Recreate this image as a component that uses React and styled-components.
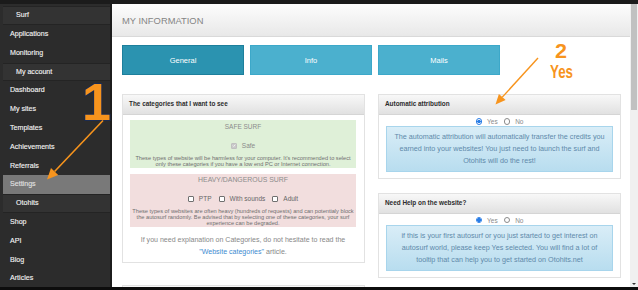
import React from 'react'
import styled, { createGlobalStyle } from 'styled-components'

const GlobalStyle = createGlobalStyle`
  html, body {
    margin: 0;
    padding: 0;
    background: #161616;
    overflow: hidden;
  }
  body {
    font-family: "Liberation Sans", Arial, sans-serif;
  }
`

const Screen = styled.div`
  position: relative;
  width: 638px;
  height: 290px;
  display: flex;
  flex-direction: column;
  background: #161616;
  overflow: hidden;
`

const TopStrip = styled.div`
  flex: none;
  height: 4px;
  background: #1b1b1b;
`

const Body = styled.div`
  flex: none;
  display: flex;
  height: 283px;
`

const BottomStrip = styled.div`
  flex: none;
  height: 3px;
  background: #0d0d0d;
`

const Sidebar = styled.nav`
  flex: none;
  width: 107px;
  padding: 2.2px 0 0 3px;
  background: #2c2c2c;
  border-right: 2px solid #1c1c1c;
  overflow: hidden;
`

const NavItem = styled.div`
  box-sizing: border-box;
  height: 18.8px;
  padding-left: ${p => (p.$section ? 13 : 7)}px;
  font-size: 7.1px;
  white-space: nowrap;
  color: ${p => (p.$active ? '#e2e2e2' : '#f4f4f4')};
  -webkit-text-stroke: 0.12px currentColor;
  background: ${p => (p.$active ? '#797979' : p.$section ? '#333333' : 'transparent')};
  border-top: ${p => (p.$section ? '1px solid #242424' : 'none')};
  border-bottom: ${p => (p.$section ? '1px solid #242424' : 'none')};
  line-height: ${p => (p.$section ? 16.8 : 18.8)}px;
`

const Main = styled.main`
  flex: 1;
  min-width: 0;
  display: flex;
  flex-direction: column;
  background: #fff;
  overflow: hidden;
`

const PanelTitle = styled.header`
  flex: none;
  height: 32px;
  display: flex;
  align-items: center;
  padding-left: 10px;
  border-bottom: 1px solid #d9d9d9;
  background: linear-gradient(#fdfdfd, #e8e8e8);
  font-size: 9.4px;
  color: #858585;
`

const Content = styled.div`
  padding: 8px 9px 0 10px;
`

const Tabs = styled.div`
  display: flex;
  gap: 6px;
`

const Tab = styled.div`
  box-sizing: border-box;
  width: 122px;
  height: 30px;
  display: flex;
  align-items: center;
  justify-content: center;
  border: 1px solid ${p => (p.$active ? '#1d7f9c' : '#3ca8c9')};
  background: ${p => (p.$active ? '#2b93b0' : '#4bb0ce')};
  color: #fff;
  font-size: 7.5px;
`

const Columns = styled.div`
  display: grid;
  grid-template-columns: 243px 243px;
  column-gap: 13px;
  align-items: start;
  margin-top: 19px;
`

const Column = styled.div`
  display: flex;
  flex-direction: column;
  gap: ${p => p.$gap}px;
`

const Card = styled.section`
  box-sizing: border-box;
  border: 1px solid #e2e2e2;
  background: #fff;
`

const CardHeader = styled.div`
  box-sizing: border-box;
  height: 20px;
  line-height: 18px;
  padding-left: 6px;
  border-bottom: 1px solid #d5d5d5;
  background: linear-gradient(#f8f8f8, #e1e1e1);
  font-size: 6.4px;
  font-weight: bold;
  color: #2c2c2c;
`

const CategoryBody = styled.div`
  padding: 5px 8px 5px 7px;
`

const SurfBox = styled.div`
  padding: 0.5px 2px 0.5px;
  text-align: center;
  background: ${p => (p.$tone === 'danger' ? '#f2dede' : '#dff0d8')};
  & + & {
    margin-top: 6px;
  }
`

const BoxTitle = styled.div`
  line-height: 12px;
  font-size: ${p => p.$size}px;
  color: #8c8c8c;
`

const CheckRow = styled.div`
  display: flex;
  justify-content: center;
  align-items: center;
  gap: 7px;
  height: 10px;
  margin-top: ${p => p.$top}px;
  font-size: 6.5px;
  color: #6a6a6a;
`

const CheckOption = styled.label`
  display: inline-flex;
  align-items: center;
  gap: 5px;
  color: ${p => (p.$disabled ? '#8a8a8a' : '#666')};
`

const Box = styled.span`
  box-sizing: border-box;
  width: 6px;
  height: 6px;
  display: inline-flex;
  align-items: center;
  justify-content: center;
  border: 1px solid ${p => (p.$checked ? '#c0c0c0' : '#707070')};
  border-radius: 1px;
  background: ${p => (p.$checked ? '#c9c9c9' : '#fff')};
`

const Desc = styled.div`
  margin-top: 4.3px;
  font-size: 5.65px;
  line-height: 6.2px;
  color: #6f6f6f;
  white-space: nowrap;
`

const HelpText = styled.p`
  margin: 6.8px 0 0;
  text-align: center;
  font-size: 7.05px;
  line-height: 11.7px;
  color: #888;
  white-space: nowrap;
`

const Link = styled.a`
  color: #3d8bd1;
  text-decoration: none;
`

const OptionBody = styled.div`
  padding: 1.3px 7px 6px 7px;
`

const RadioRow = styled.div`
  display: flex;
  justify-content: center;
  align-items: center;
  height: 10px;
  font-size: 6.5px;
  color: #8a8a8a;
`

const RadioOption = styled.label`
  display: inline-flex;
  align-items: center;
  gap: 5px;
  & + & {
    margin-left: 6px;
  }
`

const Radio = styled.span`
  box-sizing: border-box;
  width: 6.5px;
  height: 6.5px;
  border-radius: 50%;
  border: 1px solid ${p => (p.$checked ? '#2a7de6' : '#8a8a8a')};
  background: ${p => (p.$checked ? 'radial-gradient(circle, #2a7de6 0 1.6px, #fff 1.9px)' : '#fff')};
`

const InfoBox = styled.div`
  padding: 3.8px 2px;
  border: 1px solid #a8d5ec;
  background: linear-gradient(#d9edf7, #b8ddef);
  text-align: center;
  font-size: 7.2px;
  line-height: 12px;
  color: #6089aa;
  white-space: nowrap;
`

const Scrollbar = styled.div`
  flex: none;
  width: 8px;
  display: flex;
  flex-direction: column;
  background: #f0f0f0;
`

const Thumb = styled.div`
  height: 106px;
  margin: 0 1px;
  background: #c1c1c1;
`

const ScrollArrow = styled.div`
  margin: auto auto 2px;
  width: 0;
  height: 0;
  border-left: 2px solid transparent;
  border-right: 2px solid transparent;
  border-top: 2px solid #333;
`

const Overlay = styled.svg`
  position: absolute;
  left: 0;
  top: 0;
  pointer-events: none;
`

function Check() {
  return (
    <svg width="5" height="5" viewBox="0 0 10 10">
      <path d="M2 5.2 L4.2 7.4 L8.2 2.8" fill="none" stroke="#fff" strokeWidth="1.8" />
    </svg>
  )
}

function Annotations() {
  const orange = '#f7941d'
  return (
    <Overlay width="638" height="290" viewBox="0 0 638 290">
      <text
        x="82"
        y="120"
        fontFamily="Liberation Sans, Arial, sans-serif"
        fontWeight="bold"
        fontSize="52"
        fill={orange}
        stroke="#1b2b50"
        strokeWidth="2"
        paintOrder="stroke"
      >
        1
      </text>
      <line x1="103" y1="120.5" x2="54.6" y2="171.5" stroke={orange} strokeWidth="1.6" />
      <polygon points="47,179.5 58.2,175 51,168.1" fill={orange} />

      <text
        x="561"
        y="58"
        textAnchor="middle"
        fontFamily="Liberation Sans, Arial, sans-serif"
        fontWeight="bold"
        fontSize="21"
        fill={orange}
        textLength="12"
        lengthAdjust="spacingAndGlyphs"
      >
        2
      </text>
      <text
        x="561.5"
        y="78"
        textAnchor="middle"
        fontFamily="Liberation Sans, Arial, sans-serif"
        fontWeight="bold"
        fontSize="18"
        fill={orange}
        textLength="23"
        lengthAdjust="spacingAndGlyphs"
      >
        Yes
      </text>
      <line x1="538" y1="58" x2="502.3" y2="97.1" stroke={orange} strokeWidth="1.4" />
      <polygon points="495.5,104.5 505.6,100.1 498.9,94.1" fill={orange} />
    </Overlay>
  )
}

const menu = [
  { label: 'Surf', section: true },
  { label: 'Applications' },
  { label: 'Monitoring' },
  { label: 'My account', section: true },
  { label: 'Dashboard' },
  { label: 'My sites' },
  { label: 'Templates' },
  { label: 'Achievements' },
  { label: 'Referrals' },
  { label: 'Settings', active: true },
  { label: 'Otohits', section: true },
  { label: 'Shop' },
  { label: 'API' },
  { label: 'Blog' },
  { label: 'Articles' },
]

function YesNo() {
  return (
    <RadioRow>
      <RadioOption>
        <Radio $checked />
        Yes
      </RadioOption>
      <RadioOption>
        <Radio />
        No
      </RadioOption>
    </RadioRow>
  )
}

export default function App() {
  return (
    <Screen>
      <GlobalStyle />
      <TopStrip />
      <Body>
        <Sidebar>
          {menu.map(item => (
            <NavItem key={item.label} $section={item.section} $active={item.active}>
              {item.label}
            </NavItem>
          ))}
        </Sidebar>

        <Main>
          <PanelTitle>MY INFORMATION</PanelTitle>
          <Content>
            <Tabs>
              <Tab $active>General</Tab>
              <Tab>Info</Tab>
              <Tab>Mails</Tab>
            </Tabs>

            <Columns>
              <Column $gap={22}>
                <Card>
                  <CardHeader>The categories that I want to see</CardHeader>
                  <CategoryBody>
                    <SurfBox>
                      <BoxTitle $size={6.5}>SAFE SURF</BoxTitle>
                      <CheckRow $top={8}>
                        <CheckOption $disabled>
                          <Box $checked>
                            <Check />
                          </Box>
                          Safe
                        </CheckOption>
                      </CheckRow>
                      <Desc>
                        These types of website will be harmless for your computer. It's recommended to select
                        <br />
                        only these categories if you have a low end PC or Internet connection.
                      </Desc>
                    </SurfBox>
                    <SurfBox $tone="danger">
                      <BoxTitle $size={6.9}>HEAVY/DANGEROUS SURF</BoxTitle>
                      <CheckRow $top={7.5}>
                        <CheckOption>
                          <Box />
                          PTP
                        </CheckOption>
                        <CheckOption>
                          <Box />
                          With sounds
                        </CheckOption>
                        <CheckOption>
                          <Box />
                          Adult
                        </CheckOption>
                      </CheckRow>
                      <Desc>
                        These types of websites are often heavy (hundreds of requests) and can potentialy block
                        <br />
                        the autosurf randomly. Be advised that by selecting one of these categories, your surf
                        <br />
                        experience can be degraded.
                      </Desc>
                    </SurfBox>
                    <HelpText>
                      If you need explanation on Categories, do not hesitate to read the
                      <br />
                      <Link href="#">"Website categories"</Link> article.
                    </HelpText>
                  </CategoryBody>
                </Card>
                <Card>
                  <CardHeader />
                </Card>
              </Column>

              <Column $gap={14}>
                <Card>
                  <CardHeader>Automatic attribution</CardHeader>
                  <OptionBody>
                    <YesNo />
                    <InfoBox>
                      The automatic attribution will automatically transfer the credits you
                      <br />
                      earned into your websites! You just need to launch the surf and
                      <br />
                      Otohits will do the rest!
                    </InfoBox>
                  </OptionBody>
                </Card>
                <Card>
                  <CardHeader>Need Help on the website?</CardHeader>
                  <OptionBody>
                    <YesNo />
                    <InfoBox>
                      if this is your first autosurf or you just started to get interest on
                      <br />
                      autosurf world, please keep Yes selected. You will find a lot of
                      <br />
                      tooltip that can help you to get started on Otohits.net
                    </InfoBox>
                  </OptionBody>
                </Card>
              </Column>
            </Columns>
          </Content>
        </Main>

        <Scrollbar>
          <Thumb />
          <ScrollArrow />
        </Scrollbar>
      </Body>
      <BottomStrip />
      <Annotations />
    </Screen>
  )
}
